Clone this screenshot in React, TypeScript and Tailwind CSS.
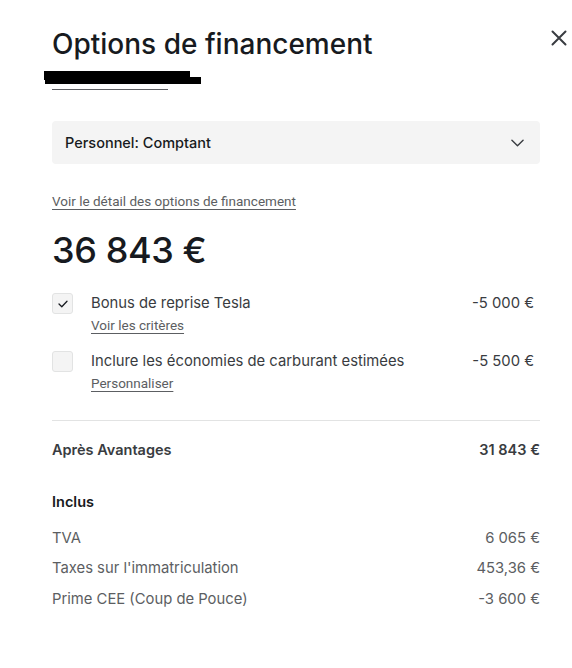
import { useState } from "react";

export default function App() {
  const [bonus, setBonus] = useState(true);
  const [fuel, setFuel] = useState(false);

  return (
    <div className="min-h-screen bg-white text-[#171a20]" style={{ fontFamily: "Inter, 'Noto Sans', sans-serif" }}>
      <div className="relative pl-[52px] pr-[32px] pt-[26px]">
        {/* fermer */}
        <button className="absolute right-[4px] top-[29px] w-[18px] h-[18px] text-[#393c41]">
          <svg viewBox="0 0 18 18" className="w-[18px] h-[18px]" fill="none" stroke="currentColor" strokeWidth="2" strokeLinecap="round">
            <path d="M2.5 2.5 L15.5 15.5 M15.5 2.5 L2.5 15.5" />
          </svg>
        </button>

        <h1 className="text-[28px] leading-[36px] font-medium">Options de financement</h1>

        {/* masqué */}
        <div className="relative h-[30px] mt-[5px]">
          <div className="absolute left-[-8px] top-[4px] w-[146px] h-[9px] bg-black" />
          <div className="absolute left-[-7px] top-[10px] w-[156px] h-[7px] bg-black" />
          <div className="absolute left-[0px] top-[22px] w-[116px] h-[1px] bg-[#5c5e62]" />
        </div>

        <div className="w-[488px]">
          {/* sélecteur */}
          <div className="mt-[24px] h-[43px] bg-[#f4f4f4] rounded-[4px] flex items-center justify-between pl-[13px] pr-[16px]">
            <span className="text-[14.5px] font-medium text-[#171a20]">Personnel: Comptant</span>
            <svg viewBox="0 0 14 8" className="w-[13px] h-[8px]" fill="none" stroke="#393c41" strokeWidth="1.5" strokeLinecap="round" strokeLinejoin="round">
              <path d="M1 1 L7 7 L13 1" />
            </svg>
          </div>

          <a className="inline-block mt-[28px] text-[13.5px] leading-[18px] text-[#5c5e62] underline underline-offset-[3px] decoration-[#5c5e62]" style={{ fontFamily: "Roboto, sans-serif" }}>
            Voir le détail des options de financement
          </a>

          <div className="mt-[15px] text-[36px] leading-[46px] font-medium tracking-[-0.4px]">36 843 €</div>

          {/* avantages */}
          <div className="mt-[20px] flex flex-col gap-[17px]">
            <div className="flex items-start">
              <button
                onClick={() => setBonus(!bonus)}
                className="w-[21px] h-[21px] rounded-[3px] bg-[#f4f4f4] border border-[#e2e3e3] flex items-center justify-center shrink-0"
              >
                {bonus && (
                  <svg viewBox="0 0 12 10" className="w-[10px] h-[8px]" fill="none" stroke="#171a20" strokeWidth="1.6" strokeLinecap="round" strokeLinejoin="round">
                    <path d="M1 5 L4.5 8.5 L11 1.5" />
                  </svg>
                )}
              </button>
              <div className="ml-[18px] flex-1">
                <div className="text-[14.8px] leading-[21px] text-[#393c41]">Bonus de reprise Tesla</div>
                <a className="block w-fit mt-[2px] text-[13.5px] leading-[18px] text-[#5c5e62] underline underline-offset-[3px]" style={{ fontFamily: "Roboto, sans-serif" }}>Voir les critères</a>
              </div>
              <div className="text-[14.8px] leading-[21px] text-[#393c41] mr-[6px]">-5 000 €</div>
            </div>
            <div className="flex items-start">
              <button
                onClick={() => setFuel(!fuel)}
                className="w-[21px] h-[21px] rounded-[3px] bg-[#f4f4f4] border border-[#e2e3e3] flex items-center justify-center shrink-0"
              >
                {fuel && (
                  <svg viewBox="0 0 12 10" className="w-[10px] h-[8px]" fill="none" stroke="#171a20" strokeWidth="1.6" strokeLinecap="round" strokeLinejoin="round">
                    <path d="M1 5 L4.5 8.5 L11 1.5" />
                  </svg>
                )}
              </button>
              <div className="ml-[18px] flex-1">
                <div className="text-[14.8px] leading-[21px] text-[#393c41]">Inclure les économies de carburant estimées</div>
                <a className="block w-fit mt-[2px] text-[13.5px] leading-[18px] text-[#5c5e62] underline underline-offset-[3px]" style={{ fontFamily: "Roboto, sans-serif" }}>Personnaliser</a>
              </div>
              <div className="text-[14.8px] leading-[21px] text-[#393c41] mr-[6px]">-5 500 €</div>
            </div>
          </div>

          <div className="mt-[28px] border-t border-[#e2e3e3]" />

          <div className="mt-[18px] flex justify-between text-[14.5px] font-semibold text-[#393c41]">
            <span>Après Avantages</span>
            <span>31 843 €</span>
          </div>

          <div className="mt-[30px] text-[14.5px] font-semibold text-[#171a20]">Inclus</div>

          <div className="mt-[15px] flex flex-col gap-[9.5px] text-[14.8px] leading-[21px] text-[#5c5e62]">
            <div className="flex justify-between"><span>TVA</span><span>6 065 €</span></div>
            <div className="flex justify-between"><span>Taxes sur l'immatriculation</span><span>453,36 €</span></div>
            <div className="flex justify-between"><span>Prime CEE (Coup de Pouce)</span><span>-3 600 €</span></div>
          </div>
        </div>
      </div>
    </div>
  );
}
